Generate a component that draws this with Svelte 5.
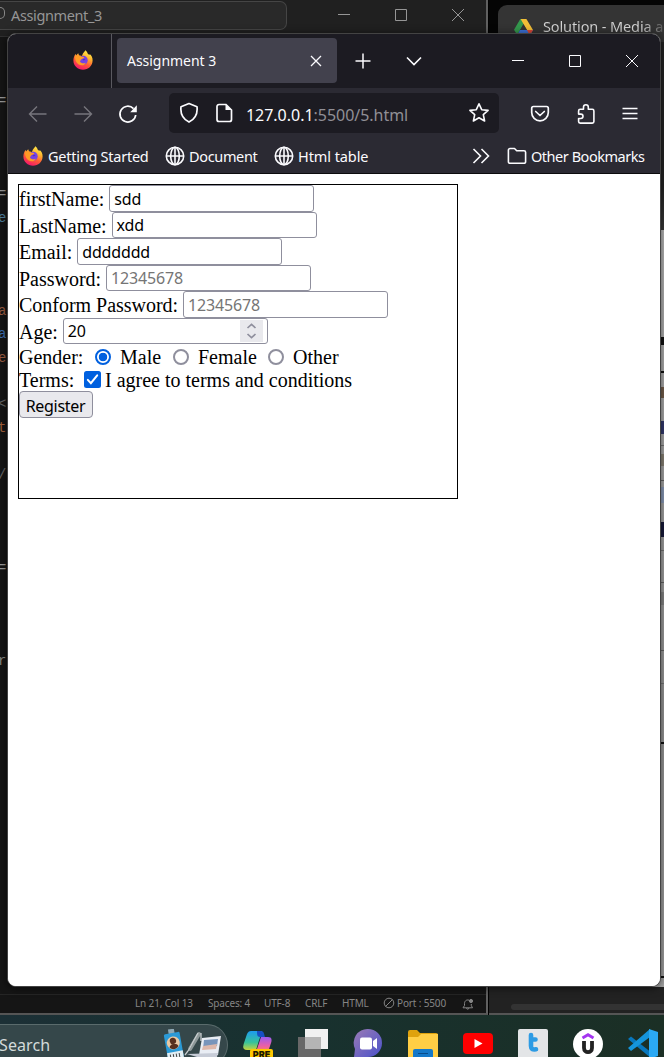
<script>
  const code = [
    ['=', '#9a9a9a'], null, null, null, ['=', '#9a9a9a'], ['er', '#4f7f9c'], null, null, null,
    ['al', '#9a5c42'], ['al', '#3d6fae'], ['er', '#9a5c42'], null, ['<', '#666'], ['th', '#a5613c'],
    null, ['/', '#666'], null, null, null, ['=', '#9a9a9a'], null, null, null, ['r.', '#888'],
  ];
  const status = [
    ['Ln 21, Col 13', 59], ['Spaces: 4', 42], ['UTF-8', 27], ['CRLF', 23], ['HTML', 27],
  ];
  const edge = [
    [337, 8, '#111'], [371, 2, '#111'], [387, 11, '#76604e'], [421, 13, '#343a70'], [445, 1, '#777'],
    [454, 12, '#8b8578'], [480, 1, '#666'], [487, 16, '#8c9dbb'], [522, 15, '#171a3a'], [550, 1, '#777'],
    [582, 1, '#666'], [592, 13, '#888'], [650, 1, '#666'], [683, 1, '#777'], [742, 2, '#111'], [976, 2, '#111'],
  ];
  const fields = [
    { label: 'firstName:', value: 'sdd', h: 27 },
    { label: 'LastName:', value: 'xdd', h: 26 },
    { label: 'Email:', value: 'ddddddd', h: 27 },
    { label: 'Password:', hint: '12345678', h: 26 },
    { label: 'Conform Password:', hint: '12345678', h: 27 },
    { label: 'Age:', value: '20', h: 26, spin: true },
  ];
</script>

{#snippet firefox()}
  <svg width="20" height="20" viewBox="0 0 20 20">
    <defs>
      <linearGradient id="fx" x1=".8" y1="0" x2=".35" y2="1">
        <stop offset="0" stop-color="#fff44f" /><stop offset=".35" stop-color="#ffb52e" />
        <stop offset=".65" stop-color="#ff5a36" /><stop offset="1" stop-color="#f5156c" />
      </linearGradient>
    </defs>
    <path fill="url(#fx)" d="M12.2.2c1.6 1 2.3 2.4 2.7 3.8.7.1 1.2.6 1.6 1.1l.2-1C18.600 5.700 19.700 8 19.600 10.500 19.500 15.800 15.200 19.800 10 19.800S.4 15.800.4 10.600c0-2.500.8-5 2.300-6.800L3 5.500 5.200 3.300l.9 2.200c1.100-.3 2 0 2.900.5L9.500 4.500C9.800 2.700 11.600 2.200 12.200.2z" />
    <circle cx="10.200" cy="10.300" r="4.500" fill="#7542e5" />
    <path fill="#ff9b25" d="M2 6.500C4 5 6.500 5.300 8.200 6.600c1 .4 2.300.2 3.100.6-.4 1.500-2.200 1.500-3 2.100-.8.500-.4 1.600-1.400 1.900 1 2.400 4 2.700 6 1.200-1 3-4.700 3.700-7.200 2.100C3.200 13 2 10 2 6.500z" />
    <path fill="#5931bd" d="M9.200 8.800c1.600-.5 3.200.1 3.500 1.500-.8-.5-1.600-.4-2.200.2z" />
  </svg>
{/snippet}
{#snippet globe()}
  <svg class="ln" width="20" height="20" viewBox="0 0 20 20" stroke-width="1.600">
    <circle cx="10" cy="10" r="8.700" /><ellipse cx="10" cy="10" rx="4.300" ry="8.700" /><path d="M1.500 10h17M10 1.300v17.400" />
  </svg>
{/snippet}
{#snippet winButtons()}
  <svg class="ln" width="16" height="16" viewBox="0 0 16 16"><path d="M2 7.500h12" /></svg>
  <svg class="ln" width="16" height="16" viewBox="0 0 16 16"><path d="M2.500 2.500h11v11h-11z" /></svg>
  <svg class="ln" width="16" height="16" viewBox="0 0 16 16"><path d="M2 2l12 12M14 2L2 14" /></svg>
{/snippet}

<div class="desktop">
  <section class="win editor">
    <header>
      <div class="search"><i></i><span>Assignment_3</span></div>
      <div class="wb">{@render winButtons()}</div>
    </header>
    <div class="code">
      {#each code as line}
        <div style:color={line?.[1]}>{line?.[0] ?? ''}</div>
      {/each}
    </div>
    <footer>
      {#each status as [text, width]}
        <span style:width="{width}px">{text}</span>
      {/each}
      <span class="port"><svg class="ln" width="12" height="12" viewBox="0 0 12 12"><circle cx="6" cy="6" r="4.800" /><path d="M2.500 9.500l7-7" /></svg>Port : 5500</span>
      <svg class="ln bell" width="12" height="13" viewBox="0 0 12 13"><path d="M7 2.200C4 1.200 2.500 3.500 2.500 5.500v2L1 9.800h9.500L9.300 7.500V6M4.500 10c.2 1.600 2.200 1.600 2.500 0" /><circle cx="9" cy="3" r="1.600" fill="#858585" /></svg>
    </footer>
  </section>

  <section class="win chrome">
    <header>
      <svg width="19" height="17" viewBox="0 0 19 17"><path fill="#34984d" d="M6.300 0h6L6 11 3.200 16 0 10.700z" /><path fill="#f2bd37" d="M6.600 0h5.800L19 11h-6z" /><path fill="#3c72d9" d="M6 11h13l-3.200 5.500H3z" /><path fill="#dd4935" d="M13 11h6l-3.200 5.500z" /><path fill="#343434" d="M9.500 5.500l3.300 5.500H6.200z" /></svg>
      <span>Solution - Media a</span>
    </header>
    <div class="tools"></div>
    <div class="page">
      {#each edge as [y, h, color]}
        <i style:top="{y - 230}px" style:height="{h}px" style:background={color}></i>
      {/each}
    </div>
    <footer><i></i></footer>
  </section>

  <section class="win browser">
    <div class="tabs">
      <div class="pin">{@render firefox()}</div>
      <div class="tab">
        <span>Assignment 3</span>
        <svg class="ln" width="12" height="12" viewBox="0 0 12 12" stroke-width="1.300"><path d="M1 1l10 10M11 1L1 11" /></svg>
      </div>
      <svg class="ln plus" width="16" height="16" viewBox="0 0 16 16" stroke-width="1.500"><path d="M8 .5v15M.5 8h15" /></svg>
      <svg class="ln" width="16" height="16" viewBox="0 0 16 16" stroke-width="1.600"><path d="M1 4.500l7 7 7-7" /></svg>
      <div class="wb">{@render winButtons()}</div>
    </div>

    <div class="nav">
      <div class="arrows">
        <svg class="ln dim" width="20" height="20" viewBox="0 0 20 20" stroke-width="1.400"><path d="M18.500 10h-17M9 2.500L1.500 10 9 17.500" /></svg>
        <svg class="ln dim" width="20" height="20" viewBox="0 0 20 20" stroke-width="1.400"><path d="M1.500 10h17M11 2.500l7.500 7.500-7.500 7.500" /></svg>
        <svg class="ln" width="20" height="20" viewBox="0 0 20 20" stroke-width="1.700"><path d="M17.700 11A7.900 7.900 0 1 1 15.500 4.600" /><path fill="#fbfbfe" stroke="none" d="M18.800 1.300v7h-6.600z" /></svg>
      </div>
      <div class="url">
        <svg class="ln" width="20" height="22" viewBox="0 0 20 22" stroke-width="1.700"><path d="M10 1.500l8 3.300c.7 6-1.500 12-8 15.300C3.500 16.800 1.300 10.800 2 4.800z" stroke-linejoin="round" /></svg>
        <svg class="ln doc" width="18" height="20" viewBox="0 0 18 20" stroke-width="1.700"><path d="M4 1.500h7L16.500 7v9.500a2 2 0 0 1-2 2H4a2 2 0 0 1-2-2v-13a2 2 0 0 1 2-2z" /><path fill="#fbfbfe" d="M10.500 1.500V7h6z" stroke="none" /></svg>
        <span class="addr"><b>127.0.0.1</b>:5500/5.html</span>
        <svg class="ln" width="22" height="22" viewBox="0 0 22 22" stroke-width="1.600"><path stroke-linejoin="round" d="M11 1.800l2.700 5.900 6.400.7-4.800 4.300 1.300 6.300-5.600-3.200L5.400 19l1.300-6.300-4.800-4.300 6.400-.7z" /></svg>
      </div>
      <div class="actions">
        <svg class="ln" width="20" height="20" viewBox="0 0 20 20" stroke-width="1.700"><path d="M3.500 2.500h13a1.800 1.800 0 0 1 1.800 1.800v4.200a8.300 8.300 0 0 1-16.600 0V4.300a1.800 1.800 0 0 1 1.800-1.800zM5.700 7.500L10 11.500l4.300-4" stroke-linejoin="round" stroke-linecap="round" /></svg>
        <svg class="ln" width="20" height="22" viewBox="0 0 20 22" stroke-width="1.600"><path stroke-linejoin="round" d="M7.500 6.300V4.100a2.400 2.400 0 0 1 4.800 0v2.200h4a1.600 1.600 0 0 1 1.600 1.600v10.600a1.600 1.600 0 0 1-1.600 1.600H4.200a1.600 1.600 0 0 1-1.600-1.600v-3h2.200a2.200 2.200 0 0 0 0-4.400H2.600V7.900a1.600 1.600 0 0 1 1.600-1.600z" /></svg>
        <svg class="ln menu" width="18" height="16" viewBox="0 0 18 16" stroke-width="1.500"><path d="M1.500 2.500h15M1.500 7.500h15M1.500 12.500h15" /></svg>
      </div>
    </div>

    <div class="marks">
      <span class="m1">{@render firefox()}<em>Getting Started</em></span>
      <span class="m2">{@render globe()}<em>Document</em></span>
      <span class="m3">{@render globe()}<em>Html table</em></span>
      <svg class="ln more" width="18" height="18" viewBox="0 0 18 18" stroke-width="1.600"><path d="M1.500 2l7 7-7 7M9.500 2l7 7-7 7" /></svg>
      <span class="m4"><svg class="ln" width="20" height="18" viewBox="0 0 20 18" stroke-width="1.600"><path stroke-linejoin="round" d="M3 1.500h4.500l2.200 2.200H17a1.600 1.600 0 0 1 1.600 1.600v9.400a1.600 1.600 0 0 1-1.600 1.600H3a1.600 1.600 0 0 1-1.600-1.600V3.100A1.600 1.600 0 0 1 3 1.500z" /></svg><em>Other Bookmarks</em></span>
    </div>

    <main>
      <form>
        {#each fields as f}
          <div class="row">
            <label for={f.label}>{f.label}</label>
            <div class="field" id={f.label} style:height="{f.h}px">
              <span class:hint={f.hint}>{f.value ?? f.hint}</span>
              {#if f.spin}
                <svg class="spin" width="23" height="22" viewBox="0 0 23 22"><path fill="#e9e9ed" d="M0 0h23v22H0z" /><path fill="none" stroke="#8f8f9d" stroke-width="1.700" d="M7.500 8l4-3.700 4 3.700M7.500 14l4 3.700 4-3.700" /></svg>
              {/if}
            </div>
          </div>
        {/each}
        <div class="gender">
          <span class="lbl">Gender:</span>
          <i class="radio on"></i><span class="male">Male</span>
          <i class="radio"></i><span class="female">Female</span>
          <i class="radio"></i><span>Other</span>
        </div>
        <div class="terms">
          <span class="lbl2">Terms:</span>
          <svg width="17" height="17" viewBox="0 0 17 17"><rect width="17" height="17" rx="2.500" fill="#0060df" /><path fill="none" stroke="#fff" stroke-width="2" stroke-linecap="round" d="M3.800 8.900l3.100 3.300 6.300-7.800" /></svg>
          <span>I agree to terms and conditions</span>
        </div>
        <div class="button"><span>Register</span></div>
      </form>
    </main>
  </section>

  <nav class="taskbar">
    <div class="find">
      <span>Search</span>
      <svg width="58" height="30" viewBox="0 0 58 30">
        <g transform="rotate(-10 10 18)"><path fill="#8fa9b5" d="M8 0h6v6H8z" /><rect x="3" y="4" width="16" height="26" rx="1.500" fill="#2b9ad6" /><path fill="#e2edf2" d="M3 23h16v7H3z" /><circle cx="11" cy="14" r="6.500" fill="#e9c9a4" /><circle cx="11" cy="12" r="3.200" fill="#57301d" /><path fill="#57301d" d="M6.500 18c1-4 8-4 9 0-2 3-7 3-9 0z" /><path stroke="#444" d="M6 25v4M9 25v4M12 25v4M15 25v4" /></g>
        <path stroke="#8e9899" stroke-width="4" stroke-linecap="round" d="M36 5L27 20" /><path stroke="#c8cdcf" stroke-width="1.300" d="M35 4L25 22l-3 4M38 4v8" />
        <path fill="#e9edf4" d="M39 9l19-2-3 19H36z" /><path fill="#7895bb" d="M41 11l14-1-1 7-14 3z" /><path fill="#ddb8ab" d="M40 17l14-2-1 5-14 1z" /><path fill="#c7ccd7" d="M24 25l31-1-1 4H34z" />
      </svg>
    </div>
    <svg class="copilot" width="30" height="30" viewBox="0 0 30 30">
      <defs>
        <linearGradient id="ca" x1="0" y1="0" x2="0" y2="1"><stop stop-color="#1d9bf0" /><stop offset=".6" stop-color="#37c29b" /><stop offset="1" stop-color="#c8d33c" /></linearGradient>
        <linearGradient id="cb" x1="0" y1="0" x2="0" y2="1"><stop stop-color="#9a5cf0" /><stop offset=".6" stop-color="#ec5fa6" /><stop offset="1" stop-color="#f98c4f" /></linearGradient>
      </defs>
      <path fill="url(#ca)" d="M8 2h11l-6 19H4c-5 0-4-4-3-7L4 5c1-2 2-3 4-3z" /><path fill="#174fc4" d="M14 2h4c3 0 3 3 4 6h-5c-3 0-3-3-3-6z" /><path fill="url(#cb)" d="M18 8h7c4 0 4 3 3 6l-3 9h-12z" />
      <rect x="7" y="20" width="23" height="12" rx="2" fill="#ffc800" /><text x="18.500" y="28.500" text-anchor="middle">PRE</text>
    </svg>
    <svg width="30" height="30" viewBox="0 0 30 30"><path fill="#686868" d="M0 8h23v22H0z" /><path fill="#f1f1f1" d="M7 0h23v20H7z" /><path fill="#b5b5b5" d="M7 8h16v12H7z" /></svg>
    <svg width="30" height="30" viewBox="0 0 30 30"><defs><linearGradient id="tm" x1="0" y1="0" x2="1" y2="1"><stop stop-color="#9a7ab5" /><stop offset="1" stop-color="#4b53cb" /></linearGradient></defs><path fill="url(#tm)" d="M15 0a14 14 0 0 1 0 28H1l1-8A14 14 0 0 1 15 0z" /><rect x="7" y="8.500" width="12" height="12" rx="2" fill="#fff" /><path fill="#fff" d="M20 12l4-3v11l-4-3z" /></svg>
    <svg width="30" height="30" viewBox="0 0 30 30"><path fill="#dfa20d" d="M0 3a2 2 0 0 1 2-2h7l3 3h16a2 2 0 0 1 2 2v6H0z" /><path fill="#ffce45" d="M0 8h10l3-3h17v25H0z" /><path fill="#1478c9" d="M5 30V22a2 2 0 0 1 2-2h16a2 2 0 0 1 2 2v8z" /><path stroke="#084c8b" d="M10 24.500h10" /></svg>
    <svg width="30" height="30" viewBox="0 0 30 30"><rect y="4" width="30" height="21" rx="4" fill="#f00" /><path fill="#fff" d="M11.500 10l8 4.500-8 4.500z" /></svg>
    <svg width="30" height="30" viewBox="0 0 30 30"><rect width="30" height="30" rx="2" fill="#e3e5e7" /><path fill="none" stroke="#2d9be4" stroke-width="4.600" stroke-linecap="round" stroke-linejoin="round" d="M13 6v11c0 3 1.500 3.800 5 3.300M13 10.500h4.500" /></svg>
    <svg width="30" height="30" viewBox="0 0 30 30"><circle cx="15" cy="15" r="15" fill="#fff" /><path fill="none" stroke="#a435f0" stroke-width="3" d="M9.500 9l5.500-3.300L20.500 9" /><path fill="none" stroke="#222" stroke-width="3.800" d="M11 12v7c0 5.500 8 5.500 8 0v-7" /></svg>
    <svg width="30" height="30" viewBox="0 0 30 30"><path fill="#0877bd" d="M0 10l3-2.500L24 24v6z" /><path fill="#1595dc" d="M0 19L22 0v8L3 22z" /><path fill="#2ba9f4" d="M21 0l9 3v24l-9 3z" /></svg>
  </nav>
</div>

<style>
  :global(body) { margin: 0; background: #000; overflow: hidden; }
  .desktop { position: relative; width: 664px; height: 1057px; overflow: hidden; background: #000; font-family: "Noto Sans", "Open Sans", sans-serif; }
  .desktop * { box-sizing: border-box; }
  svg { display: block; flex: none; }
  .ln { fill: none; stroke: #fbfbfe; }
  .win { position: absolute; display: flex; flex-direction: column; white-space: nowrap; overflow: hidden; }
  .wb { display: flex; }

  .editor { left: 0; top: 0; width: 488px; height: 1015px; background: #151515; border-right: 2px solid #606060; border-bottom: 2px solid #555; }
  .editor header { height: 37px; background: #202020; border-bottom: 1px solid #303030; display: flex; align-items: flex-start; flex: none; }
  .search { width: 287px; height: 29px; margin-top: 1px; border: 1px solid #454545; border-left: 0; border-radius: 0 7px 7px 0; background: #292929; color: #969696; display: flex; align-items: center; gap: 6px; font-size: 14.500px; }
  .search span { letter-spacing: -.38px; margin-top: -2px; }
  .search i { width: 5px; height: 12px; border: 1.500px solid #888; border-left: 0; border-radius: 0 8px 8px 0; margin-bottom: 5px; }
  .editor header .wb { margin: 7px 0 0 49px; gap: 41px; }
  .editor header .ln { stroke: #969696; }
  .code { flex: 1; padding-top: 53px; font: 14px/23.350px "Liberation Mono", monospace; letter-spacing: -.5px; }
  .code div { height: 23.350px; margin-left: -2px; }
  .editor footer { flex: none; height: 19px; border-top: 1px solid #252525; padding-left: 135px; display: flex; align-items: center; gap: 14px; font-size: 10px; letter-spacing: -.15px; color: #858585; }
  .editor footer .ln { stroke: #858585; }
  .editor footer span { margin-top: -2px; }
  .port { display: flex; align-items: center; gap: 2px; width: 65px; }

  .chrome { left: 489px; top: 0; width: 175px; height: 1015px; background: #050505; border-bottom: 2px solid #555; }
  .chrome header { flex: none; height: 37px; margin: 5px 0 0 9px; padding: 14px 0 0 16px; display: flex; gap: 10px; align-items: flex-start; background: #343434; border-radius: 9px 0 0 0; font-size: 14.500px; line-height: 20px; letter-spacing: -.12px; }
  .chrome header span { margin-top: -3px; background: linear-gradient(90deg, #d5d5d5 83%, #555 100%); background-clip: text; color: transparent; }
  .tools { flex: none; height: 188px; background: linear-gradient(#242424 76%, #3a3a3a); }
  .page { position: relative; height: 757px; margin-left: 16px; background: linear-gradient(#bbb, #999 65%, #a5a5a5); }
  .page i { position: absolute; right: 0; width: 4px; }
  .chrome footer { flex: 1; background: #222; display: flex; align-items: flex-end; padding: 0 0 3px 22px; }
  .chrome footer i { height: 6px; flex: 1; background: #333; border-radius: 3px 0 0 3px; }

  .browser { left: 7px; top: 33px; width: 654px; height: 954px; border: 1px solid #434343; border-radius: 9px; background: #fff; color: #fbfbfe; box-shadow: 0 1px 9px #0009; }
  .tabs { flex: none; height: 54px; background: #1c1b22; display: flex; align-items: center; }
  .pin { width: 104px; height: 54px; padding: 16px 0 0 65px; border-right: 1px solid #5a5960; }
  .tab { width: 220px; height: 45px; margin: 0 18px 1px 5px; padding: 0 15px 0 10px; display: flex; align-items: center; justify-content: space-between; background: #42414d; border-radius: 4px; font-size: 14px; letter-spacing: -.03px; }
  .plus { margin-right: 35px; }
  .tabs .wb { margin-left: 88px; gap: 41px; }
  .nav { flex: none; height: 50px; padding-top: 1px; background: #2b2a33; display: flex; align-items: center; }
  .arrows { display: flex; gap: 25px; margin-left: 20px; width: 141px; }
  .dim { stroke: #77767d; }
  .url { width: 330px; height: 40px; margin-bottom: 1px; background: #1c1b22; border-radius: 5px; padding: 0 9px 0 10px; display: flex; align-items: center; }
  .doc { margin: 0 13px 0 16px; }
  .addr { flex: 1; color: #908f96; font-size: 16px; letter-spacing: -.03px; margin-top: 3px; }
  .addr b { font-weight: 400; color: #fbfbfe; }
  .actions { display: flex; align-items: center; gap: 26px; margin-left: 31px; }
  .menu { margin-left: -1px; }
  .marks { flex: none; height: 36px; background: #2b2a33; border-bottom: 1px solid #0c0c0d; display: flex; align-items: center; padding-left: 15px; font-size: 14.500px; }
  .marks span { display: flex; align-items: center; gap: 4px; }
  .marks em { font-style: normal; letter-spacing: -.35px; }
  .m1 { width: 142px; }
  .marks .m1 { gap: 5px; }
  .marks .m1 em { letter-spacing: -.25px; }
  .m2 { width: 109px; }
  .m3 { width: 198px; }
  .marks .m3 em { letter-spacing: -.08px; }
  .m4 { margin-left: 17px; }
  .marks .m4 em { letter-spacing: -.47px; }

  main { flex: 1; background: #fff; padding: 10px; color: #000; }
  form { width: 440px; height: 315px; border: 1px solid #000; font: 20px/24px "Liberation Serif", serif; }
  .row { height: 26.500px; display: flex; align-items: flex-start; gap: 5px; }
  .row label { line-height: 28px; letter-spacing: -.02px; }
  .field { width: 205px; border: 1px solid #8f8f9d; border-radius: 3px; padding-left: 4px; display: flex; align-items: center; justify-content: space-between; font: 16px/20px "Noto Sans", sans-serif; letter-spacing: -.15px; }
  .field span { margin-top: 1px; }
  .hint { color: #757575; }
  .spin { margin-right: 4px; }
  .gender, .terms { height: 23px; display: flex; align-items: center; }
  .gender { margin-top: 1px; }
  .lbl { width: 76px; }
  .lbl2 { width: 65px; }
  .radio { width: 16px; height: 16px; border: 2px solid #8f8f9d; border-radius: 50%; margin-right: 9px; }
  .on { border-color: #0060df; background: radial-gradient(#0060df 4px, #fff 4.600px); }
  .male { width: 53px; }
  .female { width: 70px; }
  .terms span:last-child { margin-left: 4px; }
  .button { width: 74px; height: 27px; border: 1px solid #8f8f9d; border-radius: 4px; background: #e9e9ed; display: flex; align-items: center; justify-content: center; font: 16px/20px "Noto Sans", sans-serif; letter-spacing: -.3px; }
  .button span { margin: 3px 1px 0 0; }

  .taskbar { position: absolute; left: 0; top: 1015px; width: 664px; height: 42px; background: linear-gradient(90deg, #1c3036, #18312f 45%, #1b2f25); display: flex; align-items: flex-start; gap: 25px; overflow: hidden; }
  .taskbar > svg { margin-top: 14px; }
  .find { width: 228px; height: 42px; margin: 9px -10px 0 0; border: 1px solid #5a6b6c; border-left: 0; border-radius: 0 21px 21px 0; background: #35474a; display: flex; justify-content: space-between; padding: 4px 6px 0 0; color: #d3dada; font-size: 16px; letter-spacing: .1px; }
  .find span { margin: 5px 0 0 -1px; }
  text { font: 900 9px Inter, sans-serif; fill: #1c1900; }
</style>
